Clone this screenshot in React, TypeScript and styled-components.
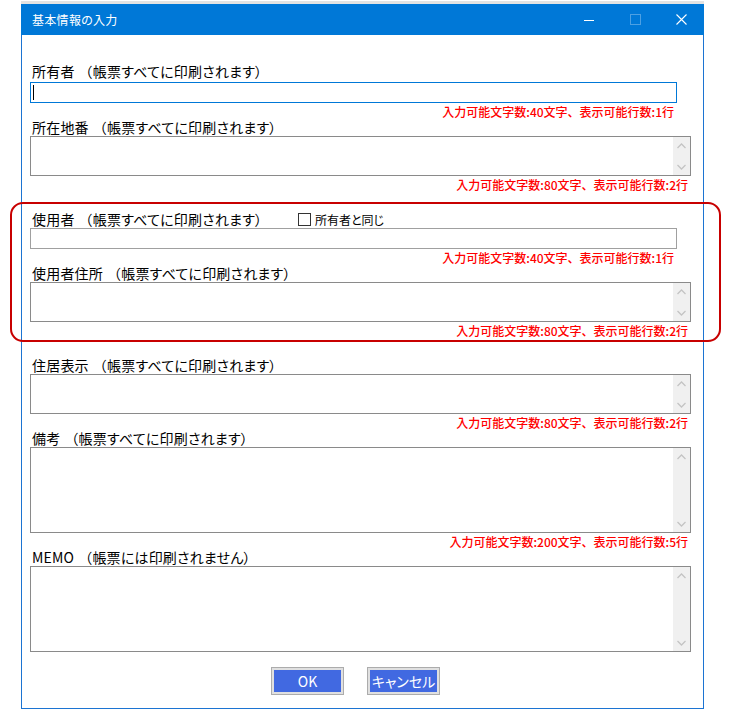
import styled, { createGlobalStyle } from 'styled-components';

const GlobalStyle = createGlobalStyle`
  html, body {
    margin: 0;
    background: #ffffff;
  }
  body {
    font-family: "Noto Sans CJK JP", "Noto Sans", sans-serif;
    color: #000;
  }
`;

const Screen = styled.div`
  padding: 4px 0 0 21px;
`;

const Window = styled.div`
  width: 683px;
  box-sizing: border-box;
  border: 1px solid #1c74d2;
  border-top: none;
  background: #fff;
  box-shadow: 0 -3px 0 #e3e3e3;
`;

const TitleBar = styled.div`
  height: 31px;
  margin: 0 -1px;
  background: #0078d7;
  display: flex;
  align-items: center;
  padding-left: 11px;
`;

const TitleText = styled.div`
  flex: 1;
  color: #fff;
  font-size: 12px;
  font-feature-settings: 'palt';
  letter-spacing: 0.3px;
`;

const ControlButton = styled.div`
  width: 46px;
  height: 31px;
  display: flex;
  align-items: center;
  justify-content: center;
`;

const Content = styled.div`
  padding: 26px 12px 13px 8px;
`;

const Field = styled.div``;

const LabelRow = styled.div<{ $withOption?: boolean; $first?: boolean }>`
  height: ${p => (p.$first ? '21px' : '19px')};
  display: ${p => (p.$withOption ? 'grid' : 'flex')};
  grid-template-columns: 266px auto;
  align-items: center;
  padding-left: 2px;
  box-sizing: border-box;
  padding-bottom: ${p => (p.$first ? '2px' : '0')};
`;

const LabelText = styled.span`
  font-size: 14px;
  font-feature-settings: 'palt';
  letter-spacing: 0.2px;
  white-space: nowrap;
`;

const OpenParen = styled.span`
  font-feature-settings: normal;
  margin-left: 4px;
`;

const Option = styled.label`
  display: flex;
  align-items: center;
  gap: 4px;
  font-size: 12px;
  font-feature-settings: 'palt';
`;

const CheckBox = styled.span`
  width: 13px;
  height: 13px;
  box-sizing: border-box;
  border: 1px solid #333;
  background: #fff;
`;

const InputFrame = styled.div<{ $focused?: boolean }>`
  height: 21px;
  margin-right: 14px;
  box-sizing: border-box;
  border: 1px solid ${p => (p.$focused ? '#0078d7' : '#a0a0a0')};
  display: flex;
  align-items: center;
  padding-left: 2px;
`;

const Caret = styled.span`
  width: 1px;
  height: 15px;
  background: #000;
`;

const PlainInput = styled.input`
  flex: 1;
  border: none;
  outline: none;
  background: transparent;
  font-size: 13px;
  padding: 0;
`;

const AreaFrame = styled.div<{ $height: number }>`
  height: ${p => p.$height}px;
  box-sizing: border-box;
  border: 1px solid #8a8a8a;
  display: flex;
`;

const PlainArea = styled.textarea`
  flex: 1;
  border: none;
  outline: none;
  resize: none;
  background: transparent;
`;

const ScrollTrack = styled.div`
  width: 17px;
  background: #f0f0f0;
  display: flex;
  flex-direction: column;
  justify-content: space-between;
  align-items: center;
  padding: 6px 0 5px;
`;

const Note = styled.div<{ $single?: boolean }>`
  height: 14px;
  box-sizing: border-box;
  padding-top: 2px;
  line-height: 13px;
  margin-right: ${p => (p.$single ? '14px' : '0')};
  padding-right: 3px;
  text-align: right;
  color: #ff0000;
  font-size: 12px;
  font-weight: 500;
  white-space: nowrap;
`;

const Group = styled.div<{ $marked?: boolean }>`
  position: relative;
  margin-top: 19px;
  &::before {
    content: '';
    display: ${p => (p.$marked ? 'block' : 'none')};
    position: absolute;
    top: -7px;
    bottom: -6px;
    left: -20px;
    right: -30px;
    border: 2.5px solid #c80000;
    border-radius: 13px;
    pointer-events: none;
  }
`;

const ButtonRow = styled.div`
  display: flex;
  gap: 23px;
  padding-left: 241px;
  margin-top: 15px;
`;

const DialogButton = styled.button`
  width: 73px;
  height: 28px;
  box-sizing: border-box;
  padding: 0;
  border: 1px solid #acacac;
  box-shadow: inset 0 0 0 2px #e0e0e0;
  background: #4169e1;
  color: #fff;
  font-family: "Noto Sans CJK JP", "Noto Sans", sans-serif;
  font-size: 14px;
  font-feature-settings: 'palt';
`;

const Chevron = ({ up }: { up?: boolean }) => (
  <svg width="9" height="6" viewBox="0 0 9 6">
    <path
      d={up ? 'M0.5 5 L4.5 1 L8.5 5' : 'M0.5 1 L4.5 5 L8.5 1'}
      fill="none"
      stroke="#c4c4c4"
      strokeWidth="1.3"
    />
  </svg>
);

const Label = ({ name, rest }: { name: string; rest: string }) => (
  <LabelText>
    {name}
    <OpenParen>（</OpenParen>
    {rest}
  </LabelText>
);

const PRINTED = '帳票すべてに印刷されます）';

const SingleField = ({ name, note, focused, first }: { name: string; note: string; focused?: boolean; first?: boolean }) => (
  <Field>
    <LabelRow $first={first}>
      <Label name={name} rest={PRINTED} />
    </LabelRow>
    <InputFrame $focused={focused}>
      {focused && <Caret />}
      <PlainInput />
    </InputFrame>
    <Note $single>{note}</Note>
  </Field>
);

const MultiField = ({ name, rest = PRINTED, note, height }: { name: string; rest?: string; note?: string; height: number }) => (
  <Field>
    <LabelRow>
      <Label name={name} rest={rest} />
    </LabelRow>
    <AreaFrame $height={height}>
      <PlainArea />
      <ScrollTrack>
        <Chevron up />
        <Chevron />
      </ScrollTrack>
    </AreaFrame>
    {note && <Note>{note}</Note>}
  </Field>
);

export default function App() {
  return (
    <>
      <GlobalStyle />
      <Screen>
        <Window>
          <TitleBar>
            <TitleText>基本情報の入力</TitleText>
            <ControlButton>
              <svg width="10" height="10" viewBox="0 0 10 10">
                <path d="M0 5.5 H10" stroke="#fff" strokeWidth="1" />
              </svg>
            </ControlButton>
            <ControlButton>
              <svg width="11" height="11" viewBox="0 0 11 11">
                <rect x="0.5" y="0.5" width="10" height="10" fill="none" stroke="rgba(255,255,255,0.3)" />
              </svg>
            </ControlButton>
            <ControlButton>
              <svg width="11" height="11" viewBox="0 0 11 11">
                <path d="M0.5 0.5 L10.5 10.5 M10.5 0.5 L0.5 10.5" stroke="#fff" strokeWidth="1.1" />
              </svg>
            </ControlButton>
          </TitleBar>
          <Content>
            <SingleField name="所有者" note="入力可能文字数:40文字、表示可能行数:1行" focused first />
            <MultiField name="所在地番" note="入力可能文字数:80文字、表示可能行数:2行" height={40} />

            <Group $marked>
              <Field>
                <LabelRow $withOption>
                  <Label name="使用者" rest={PRINTED} />
                  <Option>
                    <CheckBox />
                    所有者と同じ
                  </Option>
                </LabelRow>
                <InputFrame>
                  <PlainInput />
                </InputFrame>
                <Note $single>入力可能文字数:40文字、表示可能行数:1行</Note>
              </Field>
              <MultiField name="使用者住所" note="入力可能文字数:80文字、表示可能行数:2行" height={40} />
            </Group>

            <Group>
              <MultiField name="住居表示" note="入力可能文字数:80文字、表示可能行数:2行" height={40} />
              <MultiField name="備考" note="入力可能文字数:200文字、表示可能行数:5行" height={86} />
              <MultiField name="MEMO" rest="帳票には印刷されません）" height={86} />
            </Group>

            <ButtonRow>
              <DialogButton>OK</DialogButton>
              <DialogButton>キャンセル</DialogButton>
            </ButtonRow>
          </Content>
        </Window>
      </Screen>
    </>
  );
}
